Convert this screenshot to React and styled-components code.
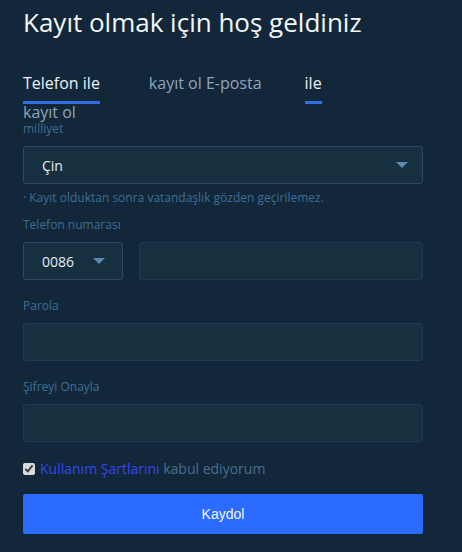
import styled, { createGlobalStyle } from 'styled-components';

const GlobalStyle = createGlobalStyle`
  html, body {
    margin: 0;
    padding: 0;
    background: #12273a;
  }
  body {
    font-family: 'Open Sans', 'Liberation Sans', sans-serif;
  }
`;

export default function App() {
  return (
    <Page>
      <GlobalStyle />
      <Title>Kayıt olmak için hoş geldiniz</Title>
      <Tabs>
        <Tab $active>Telefon ile</Tab>
        <Tab>kayıt ol E-posta</Tab>
        <Tab $active>ile</Tab>
      </Tabs>
      <TabTail>kayıt ol</TabTail>
      <Label $gap={0}>milliyet</Label>
      <SelectBox>
        <SelectText>Çin</SelectText>
        <Caret />
      </SelectBox>
      <Hint>· Kayıt olduktan sonra vatandaşlık gözden geçirilemez.</Hint>
      <Label $gap={11}>Telefon numarası</Label>
      <PhoneRow>
        <SelectBox $small>
          <SelectText>0086</SelectText>
          <Caret />
        </SelectBox>
        <Input />
      </PhoneRow>
      <Label>Parola</Label>
      <Input type="password" />
      <Label>Şifreyi Onayla</Label>
      <Input type="password" />
      <Agree>
        <Check type="checkbox" defaultChecked />
        <TermsLink>Kullanım Şartlarını</TermsLink>&nbsp;kabul ediyorum
      </Agree>
      <SubmitButton>Kaydol</SubmitButton>
    </Page>
  );
}

const Page = styled.div`
  width: 400px;
  padding: 5px 23px 0;
  display: flex;
  flex-direction: column;
`;

const Title = styled.h1`
  margin: 0;
  font-size: 26px;
  font-weight: 400;
  line-height: 34px;
  color: #f4f6f8;
`;

const Tabs = styled.div`
  display: flex;
  gap: 49px;
  margin-top: 33px;
`;

const Tab = styled.div`
  font-size: 16px;
  line-height: 22px;
  padding-bottom: 7px;
  color: ${(p) => (p.$active ? '#eef2f6' : '#8fa5b9')};
  border-bottom: 3px solid ${(p) => (p.$active ? '#2f6ee6' : 'transparent')};
  &:nth-child(2) {
    margin-right: -6px;
  }
`;

const TabTail = styled.div`
  font-size: 16px;
  line-height: 17px;
  color: #8fa5b9;
`;

const Label = styled.div`
  font-size: 12px;
  line-height: 16px;
  color: #3e6e94;
  margin-top: ${(p) => (p.$gap ?? 18)}px;
  margin-bottom: 9px;
`;

const SelectBox = styled.div`
  box-sizing: border-box;
  width: ${(p) => (p.$small ? '100px' : '100%')};
  flex-shrink: 0;
  height: 38px;
  display: flex;
  align-items: center;
  justify-content: space-between;
  padding: 0 ${(p) => (p.$small ? '17px' : '14px')} 0 18px;
  background: #16303f;
  border: 1px solid #2c4b5f;
  border-radius: 3px;
`;

const SelectText = styled.span`
  font-size: 14px;
  color: #e6edf3;
`;

const Caret = styled.span`
  width: 0;
  height: 0;
  border-left: 6px solid transparent;
  border-right: 6px solid transparent;
  border-top: 6px solid #5b8bb2;
`;

const Hint = styled.div`
  font-size: 12px;
  line-height: 16px;
  color: #3e6e94;
  margin-top: 6px;
`;

const PhoneRow = styled.div`
  display: flex;
  gap: 16px;
`;

const Input = styled.input`
  box-sizing: border-box;
  width: 100%;
  height: 38px;
  margin: 0;
  background: #16303f;
  border: 1px solid #1f3c4f;
  border-radius: 3px;
  outline: none;
`;

const Agree = styled.label`
  display: flex;
  align-items: center;
  margin-top: 17px;
  font-size: 14px;
  line-height: 20px;
  color: #4b6e8e;
`;

const Check = styled.input`
  width: 12px;
  height: 12px;
  margin: 0 5px 0 0;
  accent-color: #dadada;
`;

const TermsLink = styled.span`
  color: #3446f2;
`;

const SubmitButton = styled.button`
  margin-top: 15px;
  height: 40px;
  width: 100%;
  border: none;
  border-radius: 2px;
  background: #2b6bff;
  color: #f1f6ff;
  font-family: 'Liberation Sans', Arial, sans-serif;
  font-size: 14px;
`;
